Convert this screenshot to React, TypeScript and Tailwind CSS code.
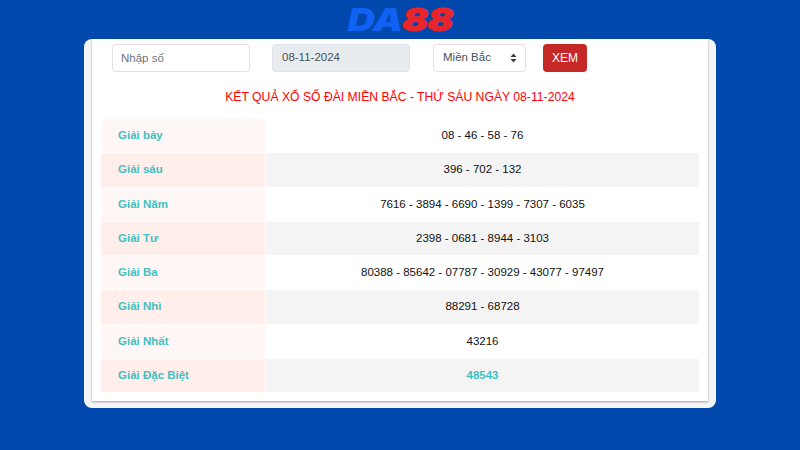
import React from 'react';

const rows = [
  { label: 'Giải bảy', value: '08 - 46 - 58 - 76' },
  { label: 'Giải sáu', value: '396 - 702 - 132' },
  { label: 'Giải Năm', value: '7616 - 3894 - 6690 - 1399 - 7307 - 6035' },
  { label: 'Giải Tư', value: '2398 - 0681 - 8944 - 3103' },
  { label: 'Giải Ba', value: '80388 - 85642 - 07787 - 30929 - 43077 - 97497' },
  { label: 'Giải Nhì', value: '88291 - 68728' },
  { label: 'Giải Nhất', value: '43216' },
  { label: 'Giải Đặc Biệt', value: '48543', special: true },
];

const App = () => {
  return (
    <div className="w-[800px] h-[450px] overflow-hidden bg-[#0048ab] font-['Liberation_Sans',Arial,sans-serif]">
      {/* logo */}
      <div className="h-[39px] flex justify-center items-start pt-[3px]">
        <div className="flex italic font-black font-['Inter',sans-serif] text-[32px] leading-[34px] scale-x-[1.19] tracking-[-0.5px] select-none">
          <span className="text-[#0f62f2]">DA</span>
          <span className="text-[#e7252b] [-webkit-text-stroke:1px_#e7252b]">88</span>
        </div>
      </div>

      <div className="mx-[84px] h-[369px] rounded-lg bg-[#f5f5f5] px-[8px] pb-[7px]">
        <div className="h-full bg-white shadow-[0_1px_2px_rgba(0,0,0,0.35)] px-[9px]">
          <div className="flex items-start pt-[5px] pl-[11px] h-[47px]">
            <input
              placeholder="Nhập số"
              className="w-[138px] h-[28px] border border-[#dee2e6] rounded bg-white px-[8px] text-[11.5px] text-[#495057] placeholder:text-[#6c757d] outline-none"
            />
            <div className="ml-[22px] w-[138px] h-[28px] border border-[#dee2e6] rounded bg-[#e9ecef] px-[9px] text-[11.5px] text-[#495057] flex items-center">
              08-11-2024
            </div>
            <div className="ml-[23px] w-[93px] h-[28px] border border-[#dee2e6] rounded bg-white pl-[9px] pr-[8px] text-[11.5px] text-[#495057] flex items-center justify-between">
              <span>Miền Bắc</span>
              <svg width="7" height="10" viewBox="0 0 7 10" fill="#343a40">
                <path d="M3.5 0.5 L6.5 4 H0.5 Z M3.5 9.5 L0.5 6 H6.5 Z" />
              </svg>
            </div>
            <button className="ml-[17px] w-[44px] h-[28px] rounded bg-[#c62828] text-white text-[12px]">XEM</button>
          </div>

          <h1 className="h-[22px] mb-[11px] flex items-center justify-center text-[12.2px] text-[#ff0000]">
            KẾT QUẢ XỔ SỐ ĐÀI MIỀN BẮC - THỨ SÁU NGÀY 08-11-2024
          </h1>

          <div className="h-[273px] flex flex-col">
            {rows.map((row, i) => (
              <div key={row.label} className="flex-1 flex gap-px mb-px last:mb-0 min-h-0">
                <div className={`w-[164px] pl-[17px] flex items-center text-[11.5px] font-bold text-[#3fc1c1] ${i % 2 === 0 ? 'bg-[#fff7f5]' : 'bg-[#ffeeea]'}`}>
                  {row.label}
                </div>
                <div className={`flex-1 flex items-center justify-center text-[11.5px] ${row.special ? 'font-bold text-[#3fc1c1]' : 'text-[#111111]'} ${i % 2 === 0 ? 'bg-white' : 'bg-[#f4f4f4]'}`}>
                  {row.value}
                </div>
              </div>
            ))}
          </div>
        </div>
      </div>
    </div>
  );
};

export default App;
